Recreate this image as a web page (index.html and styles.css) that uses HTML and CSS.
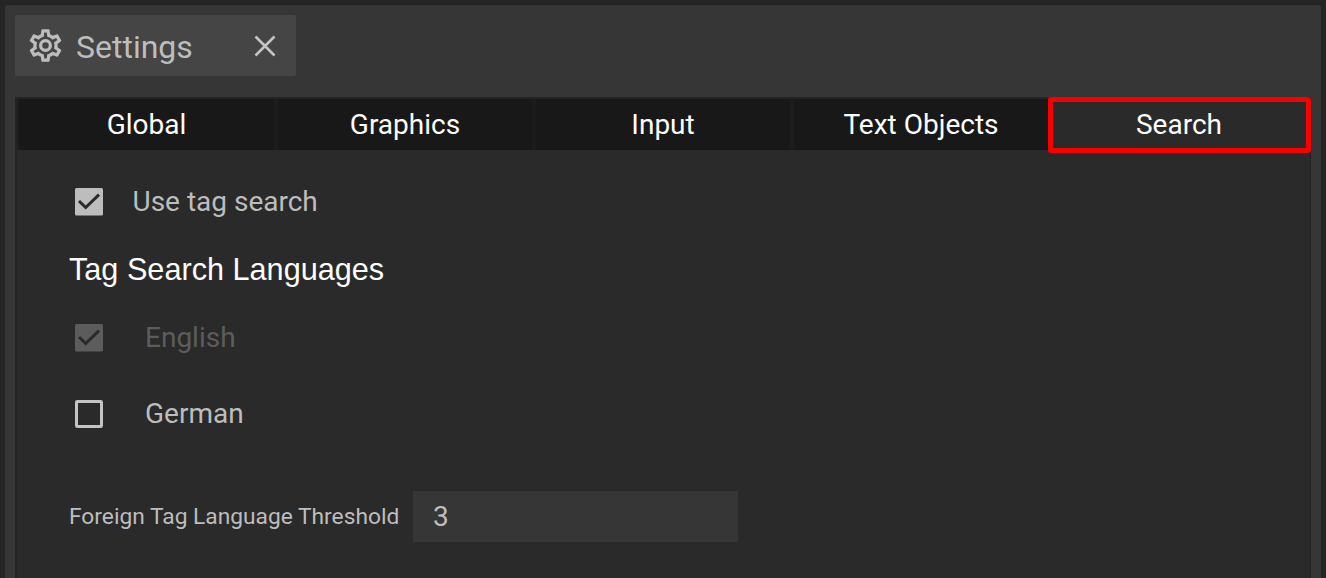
FILE: index.html
```
<!DOCTYPE html>
<html lang="en">
<head>
<meta charset="utf-8">
<title>Settings</title>
<link rel="stylesheet" href="styles.css">
</head>
<body>
<main class="window">
  <header class="window-tab">
    <svg class="gear" viewBox="0 0 24 24"><path d="M12,8A4,4 0 0,1 16,12A4,4 0 0,1 12,16A4,4 0 0,1 8,12A4,4 0 0,1 12,8M12,10A2,2 0 0,0 10,12A2,2 0 0,0 12,14A2,2 0 0,0 14,12A2,2 0 0,0 12,10M10,22C9.75,22 9.54,21.82 9.5,21.58L9.13,18.93C8.5,18.68 7.96,18.34 7.44,17.94L4.95,18.95C4.73,19.03 4.46,18.95 4.34,18.73L2.34,15.27C2.21,15.05 2.27,14.78 2.46,14.63L4.57,12.97L4.5,12L4.57,11L2.46,9.37C2.27,9.22 2.21,8.95 2.34,8.73L4.34,5.27C4.46,5.05 4.73,4.96 4.95,5.05L7.44,6.05C7.96,5.66 8.5,5.32 9.13,5.07L9.5,2.42C9.54,2.18 9.75,2 10,2H14C14.25,2 14.46,2.18 14.5,2.42L14.87,5.07C15.5,5.32 16.04,5.66 16.56,6.05L19.05,5.05C19.27,4.96 19.54,5.05 19.66,5.27L21.66,8.73C21.79,8.95 21.73,9.22 21.54,9.37L19.43,11L19.5,12L19.43,13L21.54,14.63C21.73,14.78 21.79,15.05 21.66,15.27L19.66,18.73C19.54,18.95 19.27,19.04 19.05,18.95L16.56,17.95C16.04,18.34 15.5,18.68 14.87,18.93L14.5,21.58C14.46,21.82 14.25,22 14,22H10M11.25,4L10.88,6.61C9.68,6.86 8.62,7.5 7.85,8.39L5.44,7.35L4.69,8.65L6.8,10.2C6.4,11.37 6.4,12.64 6.8,13.8L4.68,15.36L5.43,16.66L7.86,15.62C8.63,16.5 9.68,17.14 10.87,17.38L11.24,20H12.76L13.13,17.39C14.32,17.14 15.37,16.5 16.14,15.62L18.57,16.66L19.32,15.36L17.2,13.81C17.6,12.64 17.6,11.37 17.2,10.2L19.31,8.65L18.56,7.35L16.15,8.39C15.38,7.5 14.32,6.86 13.12,6.62L12.75,4H11.25Z"/></svg>
    <span class="window-title">Settings</span>
    <svg class="close" viewBox="0 0 22 22"><path d="M1.5 1.5 20.5 20.5M20.5 1.5 1.5 20.5"/></svg>
  </header>
  <section class="content">
    <nav class="tabs">
      <div class="tab">Global</div>
      <div class="tab">Graphics</div>
      <div class="tab">Input</div>
      <div class="tab">Text Objects</div>
      <div class="tab active">Search</div>
    </nav>
    <div class="form">
      <div class="option">
        <svg class="box" viewBox="0 0 28 28"><rect class="fill" width="28" height="27.5" rx="1.5"/><path class="tick" d="M4 13 10.7 19.5 24 6.7"/></svg>
        <span>Use tag search</span>
      </div>
      <h2 class="heading">Tag Search Languages</h2>
      <div class="option language disabled">
        <svg class="box" viewBox="0 0 28 28"><rect class="fill" width="28" height="27.5" rx="1.5"/><path class="tick" d="M4 13 10.7 19.5 24 6.7"/></svg>
        <span>English</span>
      </div>
      <div class="option language">
        <svg class="box" viewBox="0 0 28 28"><rect class="outline" x="1.5" y="1.5" width="25" height="25" rx="0.8"/></svg>
        <span>German</span>
      </div>
      <div class="threshold">
        <span class="threshold-label">Foreign Tag Language Threshold</span>
        <div class="number">3</div>
      </div>
    </div>
  </section>
</main>
</body>
</html>
```
FILE: styles.css
```
* { box-sizing: border-box; }
body {
  margin: 0;
  height: 578px;
  padding: 5px 5px 0;
  overflow: hidden;
  background: #252525;
  color: #bdbdbd;
  font-family: Roboto, sans-serif;
  font-size: 28px;
}
.window {
  height: 573px;
  padding: 10px 10px 0;
  background: #363636;
  border-radius: 3px 3px 0 0;
}
.window-tab {
  display: flex;
  align-items: center;
  width: 281px;
  height: 61px;
  padding: 0 20px 0 11px;
  background: #454545;
  border-radius: 2px;
}
.gear { width: 39px; height: 39px; fill: #bdbdbd; }
.window-title { margin-left: 11px; padding-top: 2px; font-size: 32px; line-height: 36px; }
.close { width: 22px; height: 22px; margin-left: auto; fill: none; stroke: #c4c4c4; stroke-width: 2.6; }
.content {
  height: 481px;
  margin-top: 21px;
  background: #2a2a2a;
  border: solid #232323;
  border-width: 2px 1px 0 2px;
}
.tabs {
  display: grid;
  grid-template-columns: 261px 258px 258px 254px 263px;
  align-items: start;
  height: 51px;
}
.tab {
  display: flex;
  align-items: center;
  justify-content: center;
  height: 51px;
  padding-bottom: 1px;
  background: #181818;
  border-right: 4px solid #1c1c1c;
  color: #fff;
}
.tab:first-child { border-left: 2px solid #1e1e1e; }
.tab:nth-child(4) { border-right: 0; }
.tab.active {
  height: 56px;
  margin-top: -2px;
  padding: 0 1px 2px 0;
  background: #2a2a2a;
  border: 5px solid #f80000;
  border-radius: 3px;
}
.form { padding: 34px 52px 0; }
.option { display: flex; align-items: center; height: 36px; padding-left: 6px; gap: 29.5px; }
.option span { padding-bottom: 2px; }
.language { gap: 42px; }
.box { width: 28px; height: 28px; }
.fill { fill: #bdbdbd; }
.tick { fill: none; stroke: #2a2a2a; stroke-width: 3; }
.outline { fill: none; stroke: #c4c4c4; stroke-width: 3; }
.disabled { color: #5c5c5c; }
.disabled .fill { fill: #5c5c5c; }
.heading {
  margin: 31px 0 33px;
  color: #fff;
  font: 400 30.65px/36px "Liberation Sans", Arial, sans-serif;
}
.disabled + .language { margin-top: 40px; }
.threshold { display: flex; align-items: center; margin-top: 59px; }
.threshold-label { width: 344px; font-size: 22.75px; white-space: nowrap; }
.number { width: 325px; height: 51px; padding-left: 20px; background: #363636; line-height: 51px; }
```
